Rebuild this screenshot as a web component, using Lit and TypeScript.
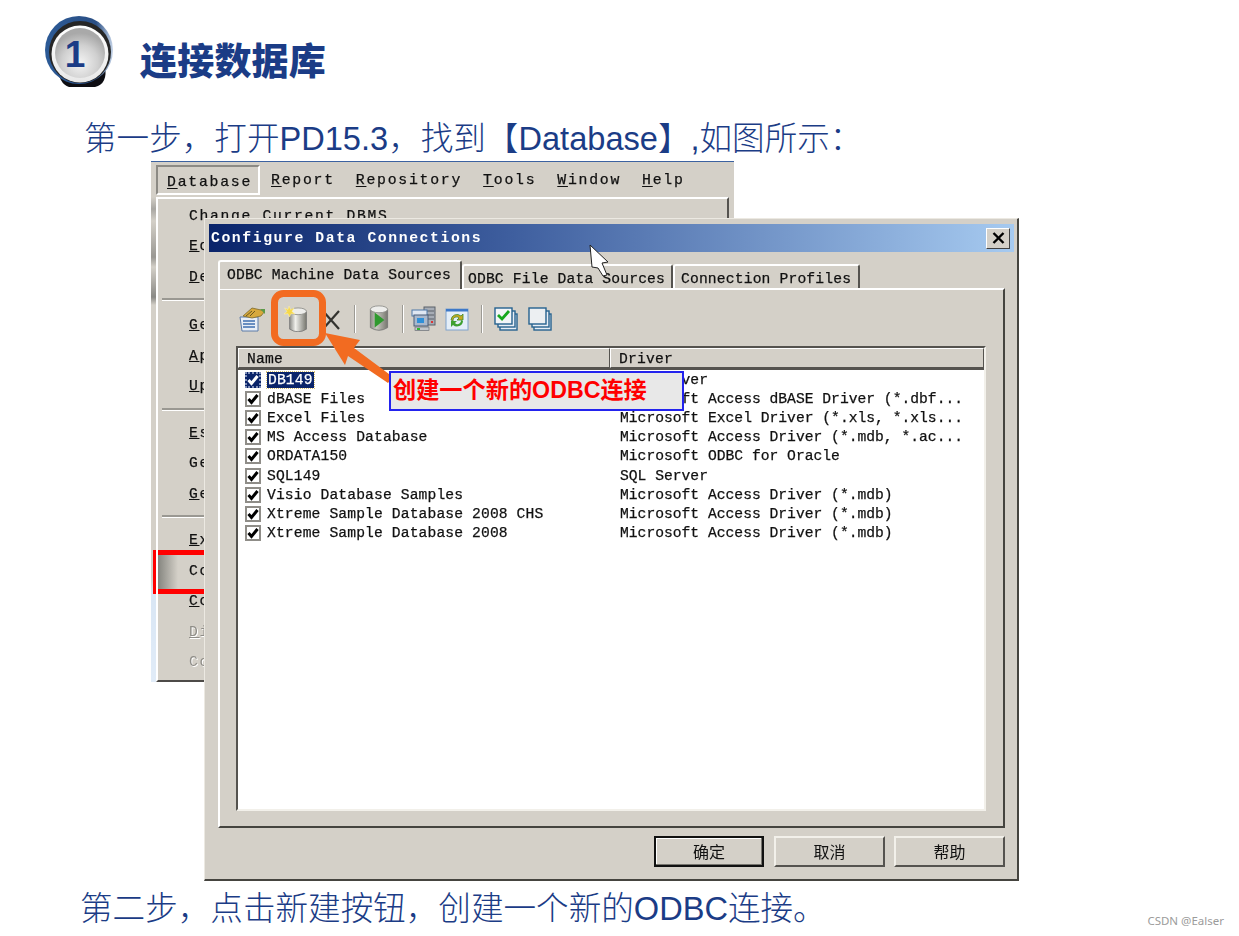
import { LitElement, html, css, svg } from "lit";
import { customElement } from "lit/decorators.js";

const ROWS: [string, string][] = [
  ["DB149", "SQL Server"],
  ["dBASE Files", "Microsoft Access dBASE Driver (*.dbf..."],
  ["Excel Files", "Microsoft Excel Driver (*.xls, *.xls..."],
  ["MS Access Database", "Microsoft Access Driver (*.mdb, *.ac..."],
  ["ORDATA150", "Microsoft ODBC for Oracle"],
  ["SQL149", "SQL Server"],
  ["Visio Database Samples", "Microsoft Access Driver (*.mdb)"],
  ["Xtreme Sample Database 2008 CHS", "Microsoft Access Driver (*.mdb)"],
  ["Xtreme Sample Database 2008", "Microsoft Access Driver (*.mdb)"],
];

const TOP = ["Report", "Repository", "Tools", "Window", "Help"];

@customElement("app-root")
export class AppRoot extends LitElement {
  static styles = css`
    :host {
      display: block;
      width: 1239px;
      height: 936px;
      position: relative;
      overflow: hidden;
      background: #fff;
      color: #1b3c86;
      font-family: "Liberation Sans", "Noto Sans CJK SC", sans-serif;
    }
    .head {
      display: flex;
      align-items: center;
      padding: 16px 0 0 45px;
      height: 72px;
    }
    .badge { width: 68px; height: 72px; flex: none; position: relative; }
    .badge svg { display: block; }
    .badge b {
      position: absolute; left: 0; top: 18px; width: 60px; text-align: center;
      font-size: 37px; line-height: 42px; color: #1b3c86;
    }
    h1 {
      margin: 22px 0 0 27px; font-size: 37px; line-height: 48px; font-weight: 900;
      letter-spacing: 0.2px;
    }
    .step { font-size: 32.6px; line-height: 44px; white-space: nowrap; font-weight: 300; }
    .s1 { margin: 29px 0 0 84px; height: 44px; }
    .s2 { margin: 6px 0 0 80px; }
    .fig { position: relative; margin-left: 151px; width: 868px; height: 720px; }
    .mono {
      font-family: "Liberation Mono", "DejaVu Sans Mono", monospace;
      color: #111; font-size: 14.67px; line-height: 18px;
      -webkit-text-stroke: 0.25px #111;
    }
    .app {
      position: absolute; left: 0; top: 0; width: 583px; height: 521px;
      background: #d4d0c8; filter: blur(0.35px);
      display: flex; flex-direction: column; border-top: 1px solid #3c62a0; box-sizing: border-box;
    }
    .bar { height: 35px; display: flex; align-items: center; flex: none; padding-left: 5px; }
    .bar span { letter-spacing: 1.75px; font-size: 14.8px; margin-right: 21px; white-space: nowrap; }
    .bar span.first {
      width: 104px; height: 30px; box-sizing: border-box; padding: 6px 0 0 9px; margin-right: 11px;
      border: 2px solid; border-color: #8c8a84 #fff #fff #8c8a84;
      font-size: 14.8px;
    }
    .bar u { text-underline-offset: 2px; }
    .below { flex: 1; display: flex; min-height: 0; }
    .edge {
      width: 5px; flex: none; align-self: stretch;
      background: linear-gradient(#d4d0c8 0, #a9a7a2 12px, #d4d0c8 24px, #9a9893 60px, #d4d0c8 70px, #8a8985 100px, #d4d0c8 108px, #d4d0c8 380px, #d9e6f4 396px, #e1ecf8 100%);
    }
    .drop {
      flex: 1; margin-right: 5px; box-sizing: border-box; padding: 7.5px 0 0 31px;
      border-top: 2px solid #fff; border-left: 2px solid #fff;
      border-right: 2px solid #55534f; border-bottom: 2px solid #4d4b48;
      position: relative; overflow: hidden;
    }
    .mi { height: 30.5px; letter-spacing: 1.7px; white-space: nowrap; }
    .mi.dis { color: #8f8d88; -webkit-text-stroke: 0; text-shadow: 1px 1px 0 #fff; }
    .hr { height: 2px; background: #9a9892; border-bottom: 1px solid #fff; margin: 0 0 13px -27px; }
    .hr.wide { margin-bottom: 15px; }
    .redbox {
      position: absolute; left: 2px; top: 388px; width: 60px; height: 44px; box-sizing: border-box;
      border: 5px solid #ff0000; background: linear-gradient(90deg, #85857f, #d4d0c8 20px);
    }
    .dialog {
      position: absolute; left: 53px; top: 57px; width: 815px; height: 663px; box-sizing: border-box;
      background: #d4d0c8; padding: 5px 3px 0 4px;
      border: 1px solid; border-color: #ece9e2 #45443f #45443f #ece9e2;
      border-width: 1px 2px 2px 1px;
      display: flex; flex-direction: column; filter: blur(0.35px);
    }
    .title {
      height: 28px; flex: none; width: 805px;
      background: linear-gradient(90deg, #0a246a 0, #3f5f9f 38%, #a6caf0 100%);
      display: flex; align-items: center; justify-content: space-between; padding: 0 4px 0 2px; box-sizing: border-box;
    }
    .title b {
      font-family: "Liberation Mono", monospace; color: #fff; font-size: 14.8px;
      letter-spacing: 1.55px; white-space: nowrap;
    }
    .close {
      width: 24px; height: 21px; background: #d4d0c8; box-sizing: border-box;
      border: 1px solid; border-color: #fff #404040 #404040 #fff;
      display: flex; align-items: center; justify-content: center;
    }
    .tabs { display: flex; align-items: flex-end; height: 35px; margin-left: 9px; flex: none; margin-top: 1px; position: relative; z-index: 1; }
    .tab {
      box-sizing: border-box; border: 2px solid; border-color: #fff #55534f transparent #fff; border-bottom: 0;
      border-radius: 3px 3px 0 0; height: 24px; padding: 4px 0 0 4px; white-space: nowrap;
      letter-spacing: 0.16px; background: #d4d0c8;
    }
    .t1 { width: 244px; height: 29px; padding: 4px 0 0 7px; margin-bottom: -1px; }
    .t2 { width: 211px; }
    .t3 { width: 187px; padding-left: 6px; }
    .panel {
      width: 787px; height: 540px; margin-left: 9px; box-sizing: border-box; flex: none;
      border: 2px solid; border-color: #fff #45443f #45443f #fff;
      padding: 15px 0 0 16px;
      display: flex; flex-direction: column;
    }
    .tools { display: flex; align-items: center; height: 28px; flex: none; margin-left: 3px; }
    .tools svg { display: block; flex: none; }
    .m7 { margin-left: 7px; } .m9 { margin-left: 9px; } .m10 { margin-left: 10px; } .m11 { margin-left: 11px; }
    .m12 { margin-left: 12px; } .m13 { margin-left: 13px; } .m18 { margin-left: 18px; }
    .sep { height: 28px; background: #9c9a94; border-right: 1px solid #fff; flex: none; width: 1px; }
    .list {
      margin-top: 13px; width: 750px; height: 465px; box-sizing: border-box; flex: none;
      background: #fff;
      border: 2px solid; border-color: #55534f #f2f0ea #f2f0ea #55534f;
      display: flex; flex-direction: column;
    }
    .lh { display: flex; height: 20px; flex: none; background: #d4d0c8; border-bottom: 2px solid #55534f; }
    .lh div {
      box-sizing: border-box; height: 20px; padding: 1px 0 0 8px; letter-spacing: 0.2px;
      border: 1px solid; border-color: #fff #55534f #55534f #fff;
    }
    .lh .c1 { width: 372px; flex: none; }
    .lh .c2 { flex: 1; }
    .rows { padding: 0 0 0 7px; display: flex; flex-direction: column; }
    .row { display: flex; align-items: center; height: 19.2px; white-space: nowrap; }
    .cb {
      width: 16px; height: 16px; box-sizing: border-box; border: 2px solid #8f8d88; background: #fff; flex: none;
      display: flex; align-items: center; justify-content: center;
    }
    .cb.sel { background: #0a246a; border: 2px dotted #7f8fb8; }
    .nm { margin-left: 6px; width: 353px; letter-spacing: 0.12px; flex: none; }
    .nm.sel span { background: #0a246a; color: #fff; -webkit-text-stroke: 0.25px #fff; outline: 1px dotted #d8c070; padding: 0 1px; }
    .foot { display: flex; justify-content: flex-end; gap: 10px; margin: 8px 0 0; padding-right: 9px; flex: none; }
    .btn {
      width: 111px; height: 31px; box-sizing: border-box; background: #d4d0c8;
      border: 2px solid; border-color: #f2f0ea #55534f #55534f #f2f0ea;
      font-size: 16px; color: #111; text-align: center; line-height: 27px;
      font-family: "Noto Sans CJK SC", sans-serif;
    }
    .btn.mid { margin-right: -1px; }
    .btn.def { width: 110px; border-color: #111; box-shadow: inset -1px -1px 0 #77756f, inset 1px 1px 0 #fff; }
    .over { position: absolute; left: 0; top: 0; pointer-events: none; display: block; }
    .call {
      position: absolute; left: 238px; top: 210px; width: 295px; height: 40px; box-sizing: border-box;
      border: 2px solid #2323ee; background: #e8e8e8; color: #ff0000;
      font-weight: 700; font-size: 23.2px; line-height: 34px; padding-left: 2px; white-space: nowrap;
      font-family: "Liberation Sans", "Noto Sans CJK SC", sans-serif;
    }
    .mark {
      position: absolute; right: 15px; top: 914px; font-size: 11.5px; line-height: 14px;
      color: #9b9b9b; font-family: "Noto Sans", "Liberation Sans", sans-serif;
    }
  `;

  private check(sel: boolean) {
    return html`<span class="cb ${sel ? "sel" : ""}"><svg width="12" height="12" viewBox="0 0 12 12"><path d="M1.5 6 L4.5 9.5 L10.5 2" fill="none" stroke="${sel ? "#fff" : "#000"}" stroke-width="3"/></svg></span>`;
  }

  private badge() {
    return html`<div class="badge">
      <svg width="68" height="72" viewBox="0 0 68 72">
        <defs>
          <radialGradient id="gl" cx="50%" cy="70%" r="60%"><stop offset="0" stop-color="#f4f4f4"/><stop offset="0.6" stop-color="#d0d0d0"/><stop offset="1" stop-color="#a9a9a9"/></radialGradient>
          <linearGradient id="rim" x1="0" y1="0" x2="0" y2="1"><stop offset="0" stop-color="#fff"/><stop offset="1" stop-color="#e8e8e8"/></linearGradient>
          <linearGradient id="ring" x1="0" y1="0" x2="1" y2="0"><stop offset="0" stop-color="#2c5a96"/><stop offset="0.75" stop-color="#2a4f85"/><stop offset="1" stop-color="#c5d4e8"/></linearGradient>
        </defs>
        <path d="M12 50 H60 Q63 68 50 71 H24 Q14 68 12 50 Z" fill="#0d0d12"/>
        <circle cx="34" cy="34" r="34" fill="url(#ring)"/>
        <circle cx="35" cy="36" r="31" fill="#262626"/>
        <circle cx="35" cy="38" r="28.500" fill="url(#rim)"/>
        <circle cx="35" cy="37" r="25" fill="url(#gl)"/>
      </svg>
      <b>1</b>
    </div>`;
  }

  private cyl(body: string) {
    return svg`<defs><linearGradient id="cy${body.slice(1)}" x1="0" x2="1"><stop offset="0" stop-color="#8d8d88"/><stop offset="0.35" stop-color="${body}"/><stop offset="1" stop-color="#77776f"/></linearGradient></defs>
      <path d="M3 6 V23 Q11 28 19 23 V6 Z" fill="url(#cy${body.slice(1)})" stroke="#777" stroke-width="0.8"/>
      <ellipse cx="11" cy="6" rx="8" ry="3.2" fill="#ededeb" stroke="#8d8d88" stroke-width="0.8"/>`;
  }

  private tools() {
    return html`<div class="tools">
      <svg width="26" height="26" viewBox="0 0 26 26">
        <path d="M1 11 H19 V25 H3 Z" fill="#e9eef6" stroke="#5b7aa8"/>
        <path d="M4 15 H16 M4 18 H16 M4 21 H16" stroke="#3f6fb0" stroke-width="1.4"/>
        <path d="M4 10 L13 2 L22 4 L26 5 L22 10 L13 12 Z" fill="#d7a93c" stroke="#7c6a2c" stroke-width="0.8"/>
        <path d="M7 10 L13 5 M11 10 L16 5" stroke="#6b5820"/>
        <path d="M21 3 H26 V8 Z" fill="#5c9a48"/>
      </svg>
      <svg class="m18" width="26" height="26" viewBox="0 0 26 26">
        <g transform="translate(3.500 -1) scale(1.05)">${this.cyl("#f0f0ec")}</g>
        <path d="M6 0 L7.5 3.5 L11 2 L9 5.5 L12 8 L8 7.7 L6.5 11 L5 7.7 L1 8 L4 5.5 L1.500 2 L5 3.5 Z" fill="#f6d84a" stroke="#fff3b0" stroke-width="0.5"/>
      </svg>
      <svg class="m12" width="20" height="26" viewBox="0 0 20 26"><path d="M2 5 L18 23 M18 5 L2 23" stroke="#33332f" stroke-width="2.2"/></svg>
      <span class="sep m13"></span>
      <svg class="m13" width="20" height="28" viewBox="2 2 18 26">
        ${this.cyl("#c8c8c0")}
        <path d="M7 9 L16 16 L7 23 Z" fill="#2f9a2f"/>
      </svg>
      <span class="sep m13"></span>
      <svg class="m7" width="25" height="26" viewBox="0 0 25 26">
        <rect x="13" y="1" width="11" height="18" fill="#a6acb5" stroke="#5a6068"/>
        <path d="M14 5 H23 M14 9 H23 M14 13 H23" stroke="#5a6068"/>
        <rect x="1" y="4" width="15" height="6" fill="#dfe7f2" stroke="#4f78a8"/>
        <rect x="3" y="9" width="14" height="11" fill="#a9b8cc" stroke="#4a5c78"/>
        <rect x="6" y="12" width="7" height="5" fill="#2f8fd8"/>
        <rect x="4" y="21" width="14" height="3.500" fill="#c2c5ca" stroke="#5a6068" stroke-width="0.6"/>
        <rect x="20" y="15" width="2" height="2" fill="#d33"/><rect x="6" y="22" width="3" height="2" fill="#2fb52f"/>
      </svg>
      <svg class="m9" width="24" height="26" viewBox="0 0 24 26">
        <rect x="1" y="3" width="22" height="21" fill="#e4eef8" stroke="#7fa2cc"/>
        <rect x="1" y="3" width="22" height="2.500" fill="#3d78c8"/>
        <path d="M6 14 A6 6 0 0 1 16 10 L18 8 V14 H12 L14 12 A3.500 3.500 0 0 0 8 15 Z" fill="#c9a820" stroke="#3c8a2c" stroke-width="0.8"/>
        <path d="M18 15 A6 6 0 0 1 8 19 L6 21 V15 H12 L10 17 A3.500 3.500 0 0 0 16 14 Z" fill="#3ea030"/>
      </svg>
      <span class="sep m12"></span>
      <svg class="m11" width="24" height="26" viewBox="0 0 24 26">
        <rect x="6" y="8" width="17" height="16" fill="#e8eef6" stroke="#25628f" stroke-width="1.4"/>
        <rect x="4" y="5" width="17" height="16" fill="#e8eef6" stroke="#25628f" stroke-width="1.400"/>
        <rect x="1" y="2" width="17" height="16" fill="#f2f5f8" stroke="#25628f" stroke-width="1.400"/>
        <path d="M4 9 L8 13 L15 5" fill="none" stroke="#16a81e" stroke-width="2.800"/>
      </svg>
      <svg class="m10" width="24" height="26" viewBox="0 0 24 26">
        <rect x="6" y="8" width="17" height="16" fill="#e8eef6" stroke="#25628f" stroke-width="1.4"/>
        <rect x="4" y="5" width="17" height="16" fill="#e8eef6" stroke="#25628f" stroke-width="1.400"/>
        <rect x="1" y="2" width="17" height="16" fill="#eceff2" stroke="#25628f" stroke-width="1.400"/>
      </svg>
    </div>`;
  }

  private menu() {
    const groups = [
      ["Change Current DBMS", "Edit Current DBMS", "Default Physical Options"],
      ["Generate Database", "Apply Model Changes", "Update Model from Database"],
      ["Estimate Database Size", "Generate Test Data", "Generate Database"],
      ["Execute SQL", "Configure Connections", "Connect", "Disconnect", "Connection Information"],
    ];
    const under = new Set(["Edit Current DBMS", "Default Physical Options", "Generate Database", "Apply Model Changes", "Update Model from Database", "Estimate Database Size", "Execute SQL", "Connect", "Disconnect"]);
    return html`<div class="app mono">
      <div class="bar">
        <span class="first"><u>D</u>atabase</span>
        ${TOP.map((t) => html`<span><u>${t[0]}</u>${t.slice(1)}</span>`)}
      </div>
      <div class="below">
        <div class="redbox"></div>
        <div class="edge"></div>
        <div class="drop">
          ${groups.map(
            (g, i) => html`${g.map(
              (m, j) => html`<div class="mi ${i === 3 && j >= 3 ? "dis" : ""}">${under.has(m) ? html`<u>${m[0]}</u>${m.slice(1)}` : m}</div>`
            )}${i < 3 ? html`<div class="hr ${i === 0 ? "wide" : ""}"></div>` : ""}`
          )}
        </div>
      </div>
    </div>`;
  }

  render() {
    return html`
      <div class="head">${this.badge()}<h1>连接数据库</h1></div>
      <div class="step s1">第一步，打开PD15.3，找到【Database】,如图所示：</div>
      <div class="fig">
        ${this.menu()}
        <div class="dialog">
          <div class="title">
            <b>Configure Data Connections</b>
            <span class="close"><svg width="13" height="12" viewBox="0 0 13 12"><path d="M1.500 1 L11.500 11 M11.500 1 L1.500 11" stroke="#000" stroke-width="2.400"/></svg></span>
          </div>
          <div class="tabs mono">
            <div class="tab t1">ODBC Machine Data Sources</div>
            <div class="tab t2">ODBC File Data Sources</div>
            <div class="tab t3">Connection Profiles</div>
          </div>
          <div class="panel">
            ${this.tools()}
            <div class="list mono">
              <div class="lh"><div class="c1">Name</div><div class="c2">Driver</div></div>
              <div class="rows">
                ${ROWS.map(
                  ([n, d], i) => html`<div class="row">
                    ${this.check(i === 0)}
                    <span class="nm ${i === 0 ? "sel" : ""}"><span>${n}</span></span>
                    <span>${d}</span>
                  </div>`
                )}
              </div>
            </div>
          </div>
          <div class="foot">
            <div class="btn def">确定</div>
            <div class="btn mid">取消</div>
            <div class="btn">帮助</div>
          </div>
        </div>
        <svg class="over" width="868" height="720" viewBox="0 0 868 720">
          <rect x="123.500" y="132.500" width="48" height="49" rx="9" fill="none" stroke="#f26b21" stroke-width="7"/>
          <path d="M174 172 L209 179 L203 187 L242 216 L237 222 L197 195 L194 204 Z" fill="#f26b21"/>
          <path d="M439 84 L457 101 L451 102 L456 114 L452 115 L447 107 L441 106 Z" fill="#fff" stroke="#222" stroke-width="1"/>
        </svg>
        <div class="call">创建一个新的ODBC连接</div>
      </div>
      <div class="step s2">第二步，点击新建按钮，创建一个新的ODBC连接。</div>
      <div class="mark">CSDN @Ealser</div>
    `;
  }
}
